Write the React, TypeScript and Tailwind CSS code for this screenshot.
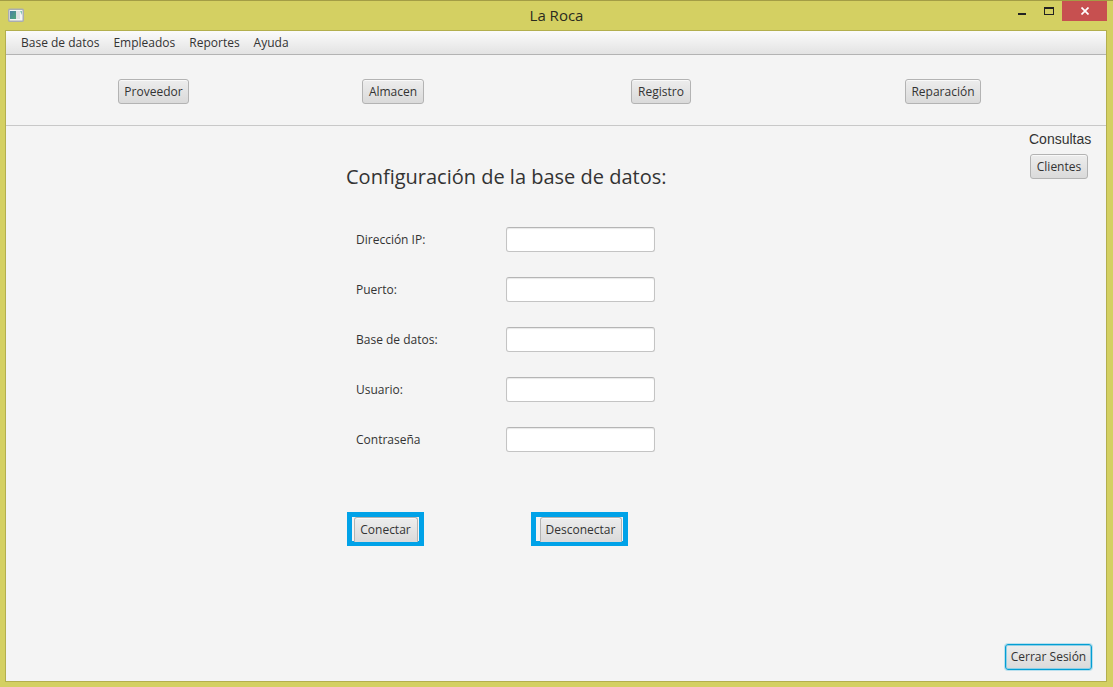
import React from 'react';

const buttonClass =
  'h-[25px] shrink-0 whitespace-nowrap rounded-[3px] border border-[#b3b3b3] bg-linear-to-b from-[#ededed] to-[#dadada] text-center text-xs leading-[22px] text-[#333333] inset-shadow-[0_1px_0_#f9f9f9]';

function Button({ className, children }: { className: string; children: React.ReactNode }) {
  return (
    <button type="button" className={`${buttonClass} ${className}`}>
      {children}
    </button>
  );
}

function AppIcon() {
  return (
    <svg width="16" height="14" viewBox="0 0 16 14" aria-hidden="true">
      <defs>
        <linearGradient id="pane" x1="0" y1="0" x2="1" y2="1">
          <stop offset="0" stopColor="#4a7fa5" />
          <stop offset="1" stopColor="#4fa878" />
        </linearGradient>
      </defs>
      <rect x="0.75" y="1.25" width="14.5" height="12" rx="1" fill="#f4f5f5" stroke="#a9adb0" strokeWidth="1.5" />
      <rect x="2" y="3" width="6" height="8" fill="url(#pane)" />
      <rect x="8" y="3" width="4" height="8" fill="#dfe1e3" />
      <path d="M12 3h2v4z" fill="#86c4b4" />
    </svg>
  );
}

function TitleBar() {
  return (
    <header className="grid h-[30px] shrink-0 grid-cols-[1fr_auto_1fr] items-start border-t border-[#a39d45] pr-[6px] pl-[6px]">
      <div className="pt-[7px] pl-[2px]">
        <AppIcon />
      </div>
      <h1 className="pt-1 text-[15px] leading-5 text-[#2b2b1f]">La Roca</h1>
      <div className="flex justify-end">
        <button type="button" aria-label="Minimizar" className="flex h-5 w-[27px] items-center justify-center">
          <svg width="8" height="20" aria-hidden="true">
            <rect y="12" width="8" height="2" fill="#222" />
          </svg>
        </button>
        <button type="button" aria-label="Maximizar" className="flex h-5 w-[27px] items-center justify-center">
          <svg width="10" height="20" aria-hidden="true">
            <path d="M0 6h10v8H0zM1 8v5h8V8z" fill="#222" fillRule="evenodd" />
          </svg>
        </button>
        <button type="button" aria-label="Cerrar" className="flex h-5 w-[45px] items-center justify-center bg-[#c75050]">
          <svg width="8" height="8" viewBox="0 0 8 8" aria-hidden="true">
            <path d="M0.5 0.5L7.5 7.5M7.5 0.5L0.5 7.5" stroke="#fff" strokeWidth="1.7" />
          </svg>
        </button>
      </div>
    </header>
  );
}

const menus = ['Base de datos', 'Empleados', 'Reportes', 'Ayuda'];

const fields = [
  { id: 'ip', label: 'Dirección IP:', type: 'text' },
  { id: 'port', label: 'Puerto:', type: 'text' },
  { id: 'database', label: 'Base de datos:', type: 'text' },
  { id: 'user', label: 'Usuario:', type: 'text' },
  { id: 'password', label: 'Contraseña', type: 'password' },
];

export default function App() {
  return (
    <div className="flex min-h-screen flex-col bg-[#d4d062] font-['Open_Sans','Noto_Sans',sans-serif] text-[#333333]">
      <TitleBar />
      <div className="mr-[6px] mb-[5px] ml-[5px] flex grow flex-col border border-[#b3af4e] bg-[#f4f4f4]">
        <nav className="flex h-6 shrink-0 items-center gap-[14px] border-b border-[#b3b3b3] bg-linear-to-b from-[#fbfbfb] to-[#e3e3e3] pl-[15px]">
          {menus.map((menu) => (
            <button key={menu} type="button" className="text-xs leading-4">
              {menu}
            </button>
          ))}
        </nav>

        <div className="grid h-[71px] shrink-0 grid-cols-[244fr_269fr_274fr_201fr] items-start justify-items-start border-b border-[#c8c8c8] pt-6 pl-28">
          <Button className="w-[71px]">Proveedor</Button>
          <Button className="w-[62px]">Almacen</Button>
          <Button className="w-[60px]">Registro</Button>
          <Button className="w-[76px]">Reparación</Button>
        </div>

        <main className="grid grow grid-cols-[340fr_760fr]">
          <form className="col-start-2 row-start-1 w-[330px] pt-9" onSubmit={(e) => e.preventDefault()}>
            <h2 className="text-xl leading-[30px] whitespace-nowrap">Configuración de la base de datos:</h2>
            <div className="mt-[35px] flex flex-col gap-[25px] pl-[10px]">
              {fields.map((field) => (
                <div key={field.id} className="flex h-[25px] items-center">
                  <label htmlFor={field.id} className="w-[150px] text-xs leading-4">
                    {field.label}
                  </label>
                  <input
                    id={field.id}
                    type={field.type}
                    className="h-[25px] w-[149px] rounded-[3px] border border-[#c4c4c4] border-t-[#b5b5b5] bg-white px-2 text-xs inset-shadow-[0_1px_1px_#e8e8e8] outline-none"
                  />
                </div>
              ))}
            </div>
            <div className="mt-[60px] flex items-center gap-[107px]">
              <div className="ml-px flex h-[34px] w-[77px] justify-center border-[5px] border-[#00a2e8] bg-[#f4f4f4]">
                <Button className="h-6 w-16 rounded-b-none border-b-0">Conectar</Button>
              </div>
              <div className="flex h-[34px] w-[97px] justify-center border-[5px] border-[#00a2e8] bg-[#f4f4f4] pl-[2px]">
                <Button className="h-6 w-[82px] rounded-b-none border-b-0">Desconectar</Button>
              </div>
            </div>
          </form>

          <aside className="col-start-2 row-start-1 flex flex-col items-end justify-between justify-self-end pt-1 pr-[14px] pb-[11px]">
            <section className="flex w-[63px] flex-col gap-[6px]">
              <h3 className="font-['Liberation_Sans',sans-serif] text-sm leading-[18px]">Consultas</h3>
              <Button className="ml-px w-[58px]">Clientes</Button>
            </section>
            <button
              type="button"
              className="h-[26px] w-[87px] rounded-[3px] border border-[#039ed3] bg-linear-to-b from-[#ededed] to-[#dadada] text-xs leading-[22px] whitespace-nowrap shadow-[0_0_0_1px_#b9e0ee] inset-shadow-[0_0_0_1px_#8fcfe6]"
            >
              Cerrar Sesión
            </button>
          </aside>
        </main>
      </div>
    </div>
  );
}
